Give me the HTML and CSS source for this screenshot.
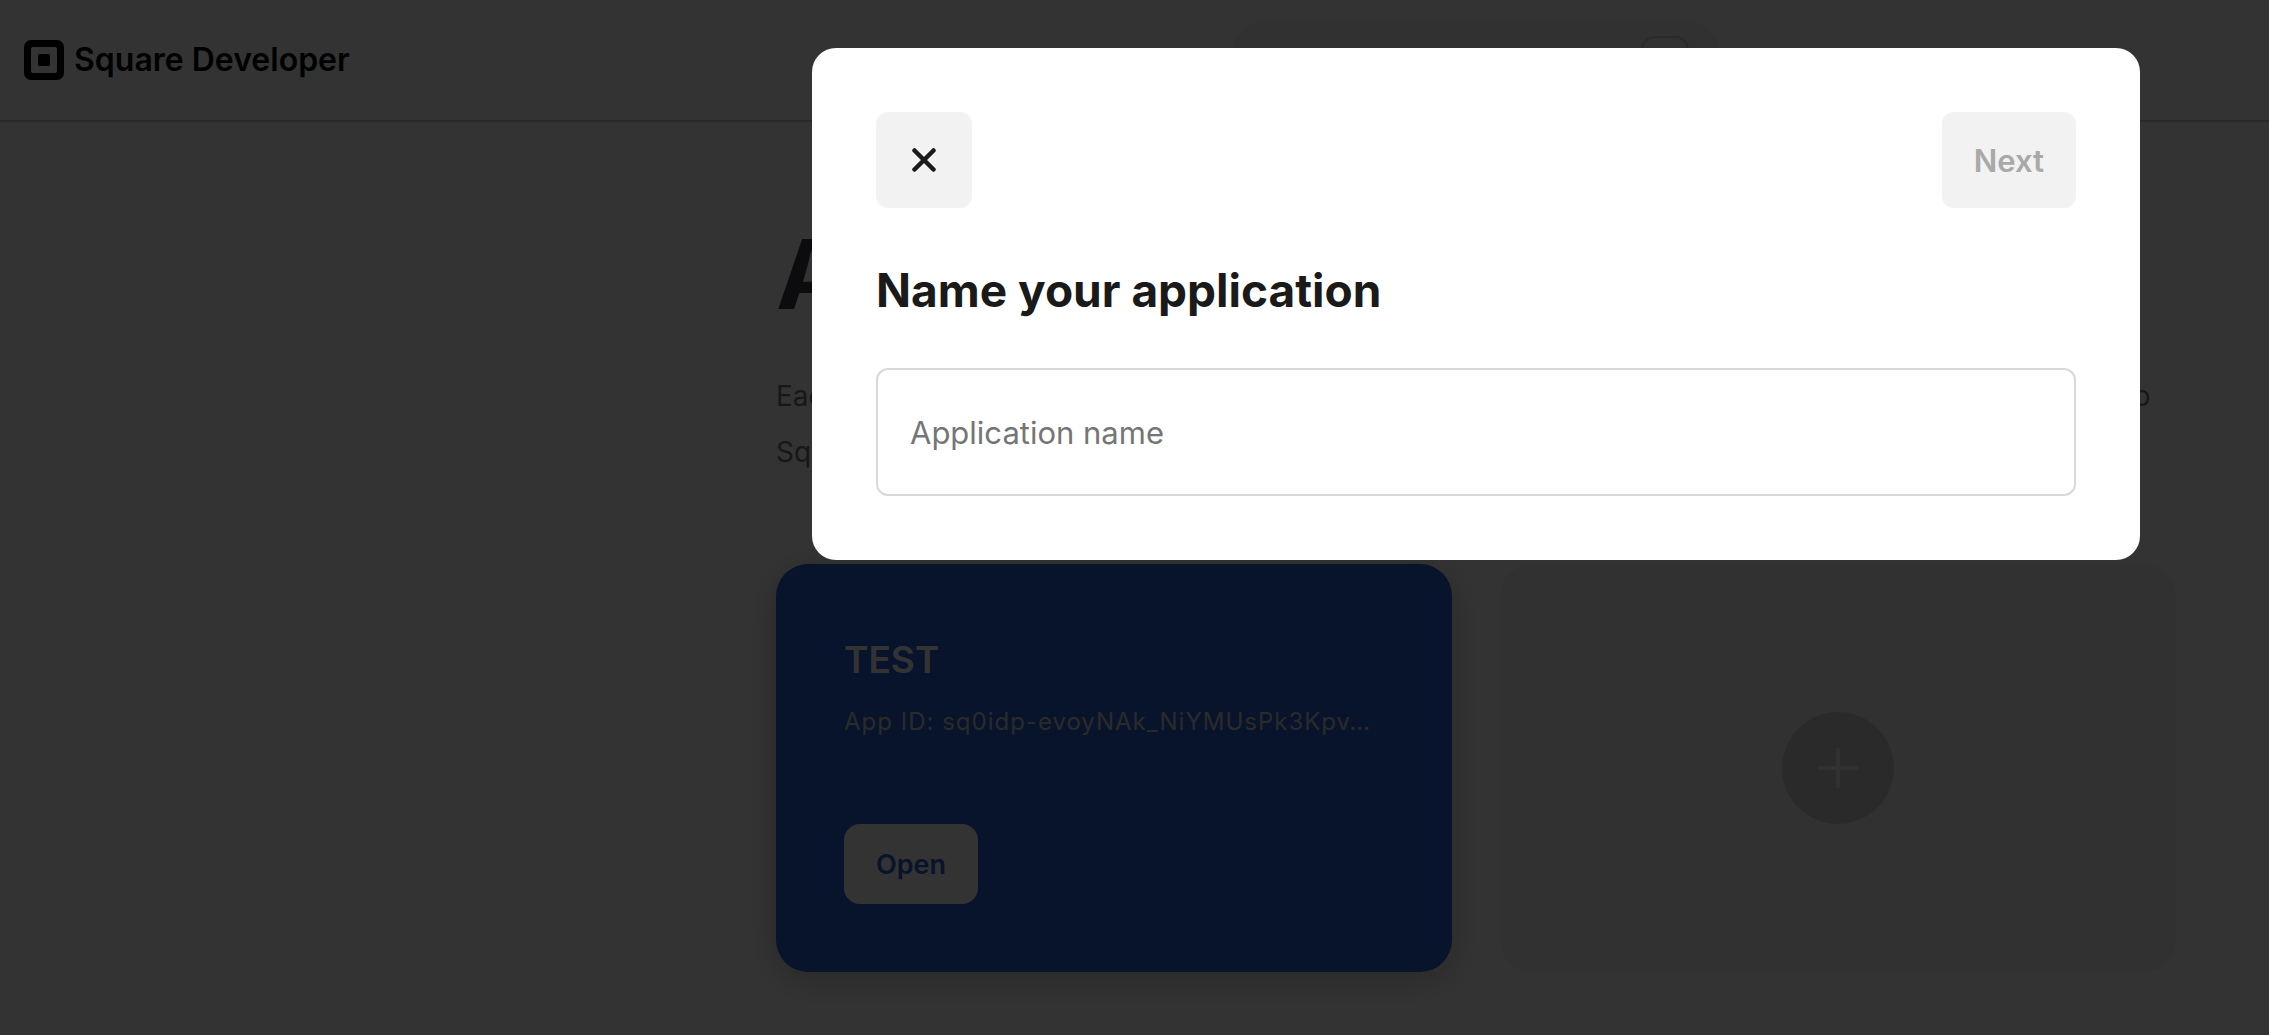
FILE: index.html
```html
<!DOCTYPE html>
<html lang="en">
<head>
<meta charset="utf-8">
<meta name="viewport" content="width=device-width, initial-scale=1">
<title>Square Developer</title>
<link rel="stylesheet" href="styles.css">
</head>
<body>
<div class="page">
  <header class="header">
    <a class="brand" href="#">
      <svg class="brand-mark" viewBox="0 0 40 40" aria-hidden="true">
        <path fill-rule="evenodd" d="M7 0h26a7 7 0 0 1 7 7v26a7 7 0 0 1-7 7H7a7 7 0 0 1-7-7V7a7 7 0 0 1 7-7zm2 7a2 2 0 0 0-2 2v22a2 2 0 0 0 2 2h22a2 2 0 0 0 2-2V9a2 2 0 0 0-2-2z"/>
        <rect x="14" y="14" width="12" height="12" rx="1.500"/>
      </svg>
      <span>Square Developer</span>
    </a>
    <div class="search"><kbd class="search-key">/</kbd></div>
  </header>
  <main class="main">
    <div class="content">
      <h1 class="title">Applications</h1>
      <p class="intro">Each application you create comes with its own unique set of credentials, which it can use to connect to Square APIs.</p>
      <div class="cards">
        <section class="card app-card">
          <h2 class="app-name">TEST</h2>
          <p class="app-id">App ID: sq0idp-evoyNAk_NiYMUsPk3Kpv…</p>
          <button class="open-button" type="button">Open</button>
        </section>
        <button class="card add-card" type="button" aria-label="Create application">
          <span class="add-circle">
            <svg class="add-icon" viewBox="0 0 40 40" aria-hidden="true"><path d="M20 2v36M2 20h36"/></svg>
          </span>
        </button>
      </div>
    </div>
  </main>
</div>
<div class="overlay">
  <form class="modal" role="dialog" aria-modal="true" aria-labelledby="modal-title">
    <div class="modal-bar">
      <button class="modal-button close-button" type="button" aria-label="Close">
        <svg class="close-icon" viewBox="0 0 24 24" aria-hidden="true"><path d="M2.500 2.500l19 19M21.500 2.500l-19 19"/></svg>
      </button>
      <button class="modal-button next-button" type="submit" disabled>Next</button>
    </div>
    <h2 class="modal-title" id="modal-title"><label for="app-name">Name your application</label></h2>
    <input class="name-input" id="app-name" type="text" placeholder="Application name">
  </form>
</div>
</body>
</html>
```
FILE: styles.css
```css
:root {
  --rail: 683px;
}

* {
  box-sizing: border-box;
}

body,
h1,
h2,
p {
  margin: 0;
}

body {
  background: #fff;
  color: #1a1a1a;
  font-family: Inter, "Liberation Sans", sans-serif;
}

button,
input {
  border: 0;
  font-family: inherit;
}

.header {
  display: grid;
  grid-template-columns: var(--rail) 1fr;
  align-items: center;
  height: 122px;
  border-bottom: 2px solid #d2d2d2;
}

.brand {
  display: flex;
  align-items: center;
  gap: 10px;
  padding-left: 24px;
  color: #000;
  font-size: 32px;
  font-weight: 600;
  line-height: 40px;
  text-decoration: none;
}

.brand-mark {
  width: 40px;
  height: 40px;
}

.search {
  display: flex;
  align-items: center;
  justify-content: flex-end;
  width: 100%;
  max-width: 492px;
  height: 80px;
  margin: 0 auto;
  padding: 0 33px;
  border-radius: 40px;
  background: #f2f2f2;
}

.search-key {
  width: 48px;
  height: 48px;
  border: 2px solid #d2d2d2;
  border-radius: 14px;
  font: 500 24px/44px Inter, sans-serif;
  text-align: center;
}

.main {
  padding-left: var(--rail);
}

.content {
  max-width: 1400px;
  margin: 0 auto;
  padding: 96px 0 62px;
}

.title {
  color: #3c3c46;
  font-size: 96px;
  font-weight: 700;
  line-height: 112px;
}

.intro {
  margin: 38px 0 84px;
  color: #737373;
  font-size: 28px;
  line-height: 56px;
}

.cards {
  display: grid;
  grid-template-columns: repeat(2, minmax(0, 1fr));
  gap: 48px;
}

.card {
  border-radius: 32px;
}

.app-card {
  padding: 68px;
  background: #2864d7;
  box-shadow: 0 8px 32px rgba(0, 0, 0, 0.22);
  color: #fff;
}

.app-name {
  font-size: 37px;
  font-weight: 600;
  line-height: 56px;
}

.app-id {
  margin: 18px 0 86px;
  color: #d2d2d2;
  font-size: 24px;
  letter-spacing: 1px;
  line-height: 32px;
  white-space: nowrap;
}

.open-button {
  display: block;
  height: 80px;
  padding: 0 32px;
  border-radius: 16px;
  background: #fff;
  color: #2864d7;
  font-size: 27px;
  font-weight: 600;
}

.add-card {
  display: flex;
  align-items: center;
  justify-content: center;
  background: #f5f5f5;
}

.add-circle {
  display: flex;
  align-items: center;
  justify-content: center;
  width: 112px;
  height: 112px;
  border-radius: 50%;
  background: #d2d2d2;
}

.add-icon {
  width: 40px;
  height: 40px;
  fill: none;
  stroke: #f5f5f5;
  stroke-linecap: round;
  stroke-width: 4;
}

.overlay {
  position: fixed;
  inset: 0;
  padding: 48px 0 0 var(--rail);
  background: rgba(0, 0, 0, 0.8);
}

.modal {
  max-width: 1328px;
  margin: 0 auto;
  padding: 64px;
  border-radius: 24px;
  background: #fff;
}

.modal-bar {
  display: flex;
  justify-content: space-between;
}

.modal-button {
  height: 96px;
  padding: 0 32px;
  border-radius: 12px;
  background: #f2f2f2;
  color: #1a1a1a;
  font-size: 31px;
  font-weight: 600;
}

.close-button {
  display: flex;
  align-items: center;
  justify-content: center;
  width: 96px;
}

.close-icon {
  flex: none;
  width: 24px;
  height: 24px;
  fill: none;
  stroke: currentColor;
  stroke-linecap: round;
  stroke-width: 4.5;
}

.next-button:disabled {
  color: #a9a9a9;
}

.modal-title {
  margin: 54px 0 50px;
  font-size: 46px;
  font-weight: 700;
  line-height: 56px;
}

.name-input {
  display: block;
  width: 100%;
  height: 128px;
  padding: 0 32px;
  border: 2px solid #d9d9d9;
  border-radius: 12px;
  background: #fff;
  color: #1a1a1a;
  font-size: 31px;
}

.name-input::placeholder {
  color: #757575;
  opacity: 1;
}
```
